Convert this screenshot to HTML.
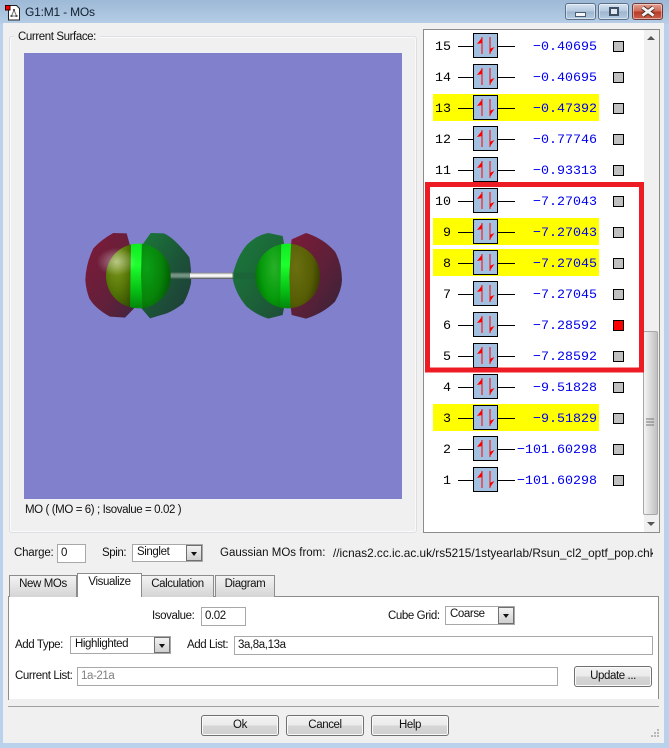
<!DOCTYPE html>
<html><head><meta charset="utf-8">
<style>
html,body{margin:0;padding:0;width:669px;height:748px;overflow:hidden;background:#b9d1ea}
body{position:relative;font:11.500px/14px "Liberation Sans",sans-serif;letter-spacing:-.4px;color:#111}
div{position:absolute;box-sizing:border-box;white-space:nowrap}
.t{line-height:14px}
.in{background:#fff;border:1px solid #a8a8a8;padding:1px 3px;line-height:15px;overflow:hidden}
.cb{background:#fff;border:1px solid #a8a8a8;padding:0 4px;line-height:14px}
.ar{right:0;top:0;bottom:0;width:16px;background:linear-gradient(#f2f2f2,#cfcfcf);border:1px solid #6f6f6f}
.ar:after{content:"";position:absolute;left:4px;top:6px;border:3.5px solid transparent;border-top:4px solid #111;border-bottom:0}
.btn{height:21px;border:1px solid #707070;border-radius:3px;background:linear-gradient(#f2f2f2 0,#ebebeb 48%,#d6d6d6 52%,#cfcfcf 100%);text-align:center;line-height:18px;box-shadow:inset 0 0 0 1px #fafafa}
.tab{border:1px solid #8c8c8c;background:linear-gradient(#f3f3f3,#d4d4d4);text-align:center;line-height:17px;border-bottom:0}
.wb{top:3px;height:17px;border:1px solid #5d7088;border-radius:3px;background:linear-gradient(#d4e2f0,#b3c8de 48%,#9db5cf 52%,#b4cbe3);box-shadow:inset 0 0 0 1px rgba(255,255,255,.45)}
</style></head>
<body>
<!-- title bar -->
<div style="left:0;top:0;width:669px;height:24px;background:linear-gradient(#9db9d6,#b5cde6)"></div>
<svg style="position:absolute;left:5px;top:5px" width="16" height="16" viewBox="0 0 16 16">
<path d="M3.500 0.500h8l3 3v11.500H3.500z" fill="#fff" stroke="#222"/>
<path d="M9 5 L6.500 11 M9 5 L11.500 11 M6.500 11 H11.500" stroke="#777" fill="none"/>
<rect x="8" y="4" width="2" height="2" fill="#555"/><rect x="5.500" y="10" width="2" height="2" fill="#555"/><rect x="10.500" y="10" width="2" height="2" fill="#555"/>
<rect x="0.500" y="0.500" width="4.500" height="4.500" fill="#f00" stroke="#300"/>
</svg>
<div class="t" style="left:25px;top:5px;color:#10202f;font-size:12px;letter-spacing:-.2px">G1:M1 - MOs</div>
<div class="wb" style="left:565px;width:31px"><div style="left:9px;top:8px;width:11px;height:5px;background:#f4f6f8;border:1px solid #4b5c70"></div></div>
<div class="wb" style="left:598px;width:31px"><div style="left:10px;top:3px;width:10px;height:9px;background:#dfe8f2;border:2px solid #3f4f63"></div></div>
<div class="wb" style="left:632px;width:31px;background:linear-gradient(#e2a093,#cf6a56 48%,#b93a27 52%,#c9604a);border-color:#6b3a3a">
<svg style="position:absolute;left:7px;top:2px" width="16" height="11" viewBox="0 0 16 11"><path d="M2.500 1.500 L13.500 9.500 M13.500 1.500 L2.500 9.500" stroke="#3d2a2a" stroke-width="4.500"/><path d="M2.500 1.500 L13.500 9.500 M13.500 1.500 L2.500 9.500" stroke="#f6f4f2" stroke-width="2.800"/></svg></div>

<!-- client -->
<div style="left:3px;top:23px;width:661px;height:720px;background:#f0f0f0"></div>

<!-- group -->
<div style="left:9px;top:36px;width:408px;height:497px;border:1px solid #dcdfe3;border-radius:3px;box-shadow:inset 0 0 0 1px #f9f9f9"></div>
<div class="t" style="left:14px;top:30px;background:#f0f0f0;padding:0 4px">Current Surface:</div>
<div style="left:24px;top:53px;width:378px;height:446px;background:#8080cc"></div>
<div class="t" style="left:25px;top:503px">MO ( (MO = 6) ; Isovalue = 0.02 )</div>

<!-- molecule -->
<svg style="position:absolute;left:60px;top:200px" width="300" height="150" viewBox="0 0 900 450">
<defs>
<linearGradient id="r1" x1="0" y1="0" x2="1" y2="1"><stop offset="0" stop-color="#7f1a38"/><stop offset=".6" stop-color="#62203a"/><stop offset="1" stop-color="#3e2440"/></linearGradient>
<linearGradient id="r2" x1="0" y1="0" x2="1" y2="1"><stop offset="0" stop-color="#7f1a38"/><stop offset=".55" stop-color="#5c2038"/><stop offset="1" stop-color="#352338"/></linearGradient>
<linearGradient id="g1" x1="0" y1="0" x2="1" y2="1"><stop offset="0" stop-color="#1a7a38"/><stop offset=".55" stop-color="#1c5238"/><stop offset="1" stop-color="#1f3a38"/></linearGradient>
<linearGradient id="g2" x1="0" y1="0" x2="1" y2="1"><stop offset="0" stop-color="#1a7c3a"/><stop offset=".6" stop-color="#1c6038"/><stop offset="1" stop-color="#1e4a38"/></linearGradient>
<linearGradient id="bond" x1="0" y1="0" x2="0" y2="1"><stop offset="0" stop-color="#8a8a8a"/><stop offset=".35" stop-color="#fff"/><stop offset=".65" stop-color="#e8e8e8"/><stop offset="1" stop-color="#444"/></linearGradient>
<radialGradient id="s1" cx=".45" cy=".32" r=".75"><stop offset="0" stop-color="#7f9a20"/><stop offset=".5" stop-color="#587808"/><stop offset="1" stop-color="#2f4a00"/></radialGradient>
<radialGradient id="s2" cx=".2" cy=".38" r=".85"><stop offset="0" stop-color="#0aa015"/><stop offset=".55" stop-color="#078209"/><stop offset="1" stop-color="#004c00"/></radialGradient>
<radialGradient id="s3" cx=".7" cy=".38" r=".85"><stop offset="0" stop-color="#28b028"/><stop offset=".5" stop-color="#069c0c"/><stop offset="1" stop-color="#005800"/></radialGradient>
<radialGradient id="s4" cx=".2" cy=".38" r=".85"><stop offset="0" stop-color="#6a7010"/><stop offset=".6" stop-color="#555c04"/><stop offset="1" stop-color="#2e2e00"/></radialGradient>
<linearGradient id="st" x1="0" y1="0" x2="0" y2="1"><stop offset="0" stop-color="#0ee820"/><stop offset=".35" stop-color="#1dff2e"/><stop offset=".7" stop-color="#06c014"/><stop offset="1" stop-color="#047a0c"/></linearGradient>
<radialGradient id="hl" cx=".5" cy=".5" r=".5"><stop offset="0" stop-color="#fff" stop-opacity=".45"/><stop offset="1" stop-color="#fff" stop-opacity="0"/></radialGradient>
<clipPath id="c1"><circle cx="235" cy="228" r="97"/></clipPath>
<clipPath id="c2"><circle cx="683" cy="228" r="97"/></clipPath>
</defs>
<path d="M76 240 Q78 190 100 145 Q125 118 160 99 L200 100 L235 228 L222 325 L195 353 L150 350 Q105 325 88 295 Q78 270 76 240Z" fill="url(#r1)"/>
<path d="M846 240 Q845 190 825 155 Q790 115 738 99 L695 118 L680 228 L695 345 L738 356 Q790 340 825 305 Q845 270 846 240Z" fill="url(#r2)"/>
<path d="M250 130 L272 99 L312 100 Q345 115 388 172 Q395 210 393 250 Q385 285 370 310 Q345 330 320 340 L270 355 L240 320Z" fill="url(#g1)"/>
<path d="M668 108 L625 99 Q590 105 560 135 Q530 170 517 230 Q525 280 560 320 Q590 345 625 356 L668 345 L690 228Z" fill="url(#g2)"/>
<rect x="330" y="218" width="190" height="19" fill="url(#bond)"/>
<rect x="330" y="218" width="60" height="19" fill="#1c5238" opacity=".6"/>
<rect x="517" y="218" width="70" height="19" fill="#1c6038" opacity=".55"/>
<g clip-path="url(#c1)">
<rect x="130" y="120" width="90" height="215" fill="url(#s1)"/>
<rect x="240" y="120" width="100" height="215" fill="url(#s2)"/>
<path d="M213 120H246L243 228 L248 335H210Z" fill="url(#st)"/>
</g>
<g clip-path="url(#c2)">
<rect x="580" y="120" width="90" height="215" fill="url(#s3)"/>
<rect x="688" y="120" width="100" height="215" fill="url(#s4)"/>
<path d="M664 120H694L688 228 L692 335H660Z" fill="url(#st)"/>
</g>
<ellipse cx="170" cy="185" rx="60" ry="42" fill="url(#hl)"/>
</svg>

<!-- MO list -->
<div style="left:423px;top:29px;width:237px;height:504px;background:#fff;border:1px solid #8c8c8c"></div>
<div style="left:644px;top:30px;width:15px;height:502px;background:#f0f0f0"></div>
<div style="left:643px;top:331px;width:15px;height:184px;border:1px solid #a8a8a8;border-radius:2px;background:linear-gradient(90deg,#f4f4f4,#dcdcdc 45%,#c0c0c0)"></div>
<svg style="position:absolute;left:0;top:0;letter-spacing:0" width="669" height="748" viewBox="0 0 669 748">
<defs>
<g id="b">
<path d="M458 0.500H515" stroke="#000"/>
<rect x="473.500" y="-12.500" width="24" height="24" fill="#a3c0e0" stroke="#000"/>
<path d="M482 -9V8 M490 -9V8" stroke="#f00" stroke-width="1"/>
<path d="M482.500 -9 L477 -2 L482.500 -3Z M489.500 8 V3 L494.500 1 Z" fill="#f00"/>
</g>
<rect id="q" x="613.500" y="-4.500" width="10" height="10" fill="#c0c0c0" stroke="#000"/>
</defs>
<g fill="#ff0"><rect x="433" y="94" width="166" height="27"/><rect x="433" y="218" width="166" height="27"/><rect x="433" y="249" width="166" height="27"/><rect x="433" y="404" width="166" height="27"/></g>
<use href="#b" y="46"/><use href="#b" y="77"/><use href="#b" y="108"/><use href="#b" y="139"/><use href="#b" y="170"/><use href="#b" y="201"/><use href="#b" y="232"/><use href="#b" y="263"/><use href="#b" y="294"/><use href="#b" y="325"/><use href="#b" y="356"/><use href="#b" y="387"/><use href="#b" y="418"/><use href="#b" y="449"/><use href="#b" y="480"/>
<use href="#q" y="46"/><use href="#q" y="77"/><use href="#q" y="108"/><use href="#q" y="139"/><use href="#q" y="170"/><use href="#q" y="201"/><use href="#q" y="232"/><use href="#q" y="263"/><use href="#q" y="294"/><use href="#q" y="356"/><use href="#q" y="387"/><use href="#q" y="418"/><use href="#q" y="449"/><use href="#q" y="480"/>
<rect x="613.500" y="320.500" width="10" height="10" fill="#f00" stroke="#000"/>
<g font-family="'Liberation Mono',monospace" font-size="13.330" text-anchor="end" fill="#000">
<text x="451" y="50">15</text><text x="451" y="81">14</text><text x="451" y="112">13</text><text x="451" y="143">12</text><text x="451" y="174">11</text><text x="451" y="205">10</text><text x="451" y="236">9</text><text x="451" y="267">8</text><text x="451" y="298">7</text><text x="451" y="329">6</text><text x="451" y="360">5</text><text x="451" y="391">4</text><text x="451" y="422">3</text><text x="451" y="453">2</text><text x="451" y="484">1</text>
</g>
<g font-family="'Liberation Mono',monospace" font-size="13.330" text-anchor="end" fill="#0000ee">
<text x="597" y="50">−0.40695</text><text x="597" y="81">−0.40695</text><text x="597" y="112">−0.47392</text><text x="597" y="143">−0.77746</text><text x="597" y="174">−0.93313</text><text x="597" y="205">−7.27043</text><text x="597" y="236">−7.27043</text><text x="597" y="267">−7.27045</text><text x="597" y="298">−7.27045</text><text x="597" y="329">−7.28592</text><text x="597" y="360">−7.28592</text><text x="597" y="391">−9.51828</text><text x="597" y="422">−9.51829</text><text x="597" y="453">−101.60298</text><text x="597" y="484">−101.60298</text>
</g>
<rect x="427.500" y="184.500" width="214" height="185.500" fill="none" stroke="#ed1c24" stroke-width="5"/>
<path d="M647 40L651 36L655 40Z M647 522H655L651 526Z" fill="#555"/>
<path d="M646 419H654M646 422H654M646 425H654" stroke="#777"/>
</svg>

<!-- charge row -->
<div class="t" style="left:14px;top:546px;letter-spacing:-.2px">Charge:</div>
<div class="in" style="left:57px;top:544px;width:29px;height:19px">0</div>
<div class="t" style="left:102px;top:546px">Spin:</div>
<div class="cb" style="left:132px;top:544px;width:71px;height:18px">Singlet<div class="ar"></div></div>
<div class="t" style="left:220px;top:546px;font-size:11.500px;letter-spacing:0">Gaussian MOs from:</div>
<div class="t" style="left:333px;top:546px;width:320px;overflow:hidden;font-size:11.800px;letter-spacing:0">//icnas2.cc.ic.ac.uk/rs5215/1styearlab/Rsun_cl2_optf_pop.chk</div>

<!-- tabs -->
<div style="left:8px;top:596px;width:651px;height:104px;background:#fff;border:1px solid #8c8c8c;border-bottom:0"></div>
<div style="left:9px;top:699px;width:650px;height:2px;background:#f0f0f0"></div>
<div class="tab" style="left:9px;top:575px;width:68px;height:22px">New MOs</div>
<div class="tab" style="left:141px;top:575px;width:73px;height:22px">Calculation</div>
<div class="tab" style="left:215px;top:575px;width:60px;height:22px">Diagram</div>
<div class="tab" style="left:77px;top:573px;width:65px;height:24px;background:#fff">Visualize</div>

<div class="t" style="left:152px;top:609px">Isovalue:</div>
<div class="in" style="left:201px;top:607px;width:45px;height:19px">0.02</div>
<div class="t" style="left:388px;top:609px">Cube Grid:</div>
<div class="cb" style="left:445px;top:606px;width:70px;height:19px">Coarse<div class="ar"></div></div>

<div class="t" style="left:15px;top:638px">Add Type:</div>
<div class="cb" style="left:70px;top:636px;width:101px;height:18px">Highlighted<div class="ar"></div></div>
<div class="t" style="left:187px;top:638px">Add List:</div>
<div class="in" style="left:234px;top:636px;width:419px;height:19px">3a,8a,13a</div>

<div class="t" style="left:15px;top:669px">Current List:</div>
<div class="in" style="left:77px;top:667px;width:481px;height:19px;color:#808080">1a-21a</div>
<div class="btn" style="left:574px;top:666px;width:78px">Update ...</div>

<div style="left:8px;top:706px;width:651px;height:1px;background:#a0a0a0"></div>
<div class="btn" style="left:201px;top:715px;width:78px">Ok</div>
<div class="btn" style="left:286px;top:715px;width:78px">Cancel</div>
<div class="btn" style="left:371px;top:715px;width:78px">Help</div>
<svg style="position:absolute;left:648px;top:728px" width="12" height="12"><path d="M9 1h2v2H9zM6 4h2v2H6zM9 4h2v2H9zM3 7h2v2H3zM6 7h2v2H6zM9 7h2v2H9z" fill="#b8b8b8"/></svg>
</body></html>
